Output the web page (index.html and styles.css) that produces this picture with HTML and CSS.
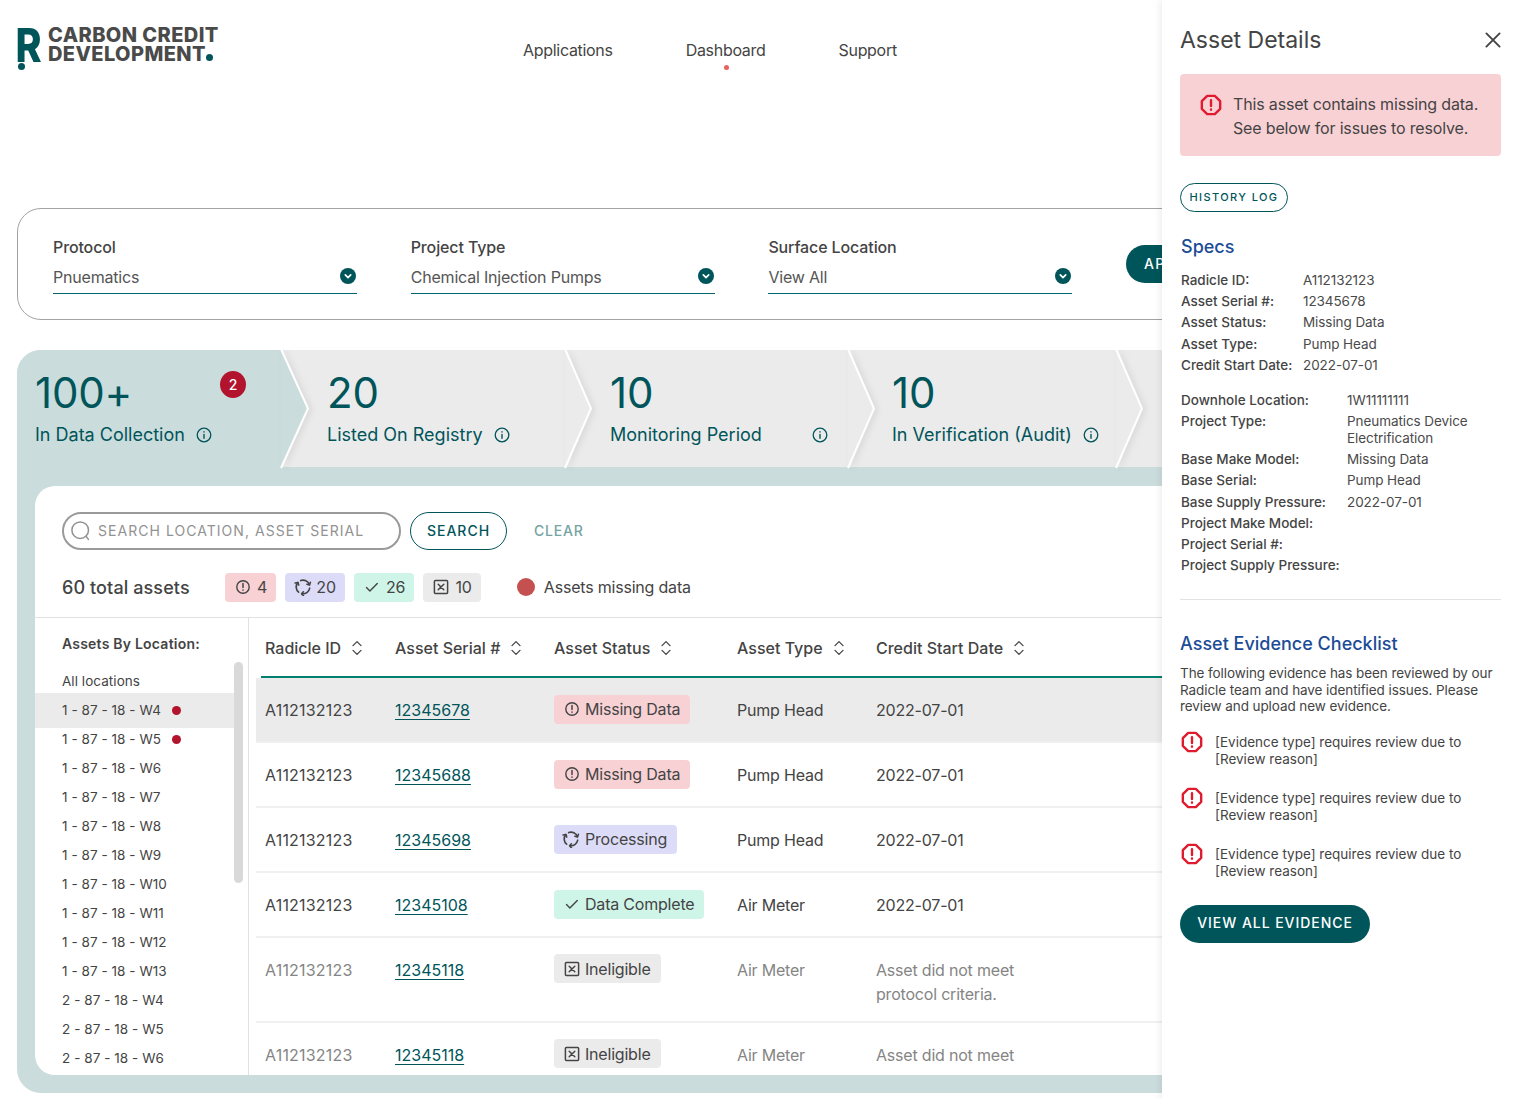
FILE: index.html
```html
<!DOCTYPE html>
<html lang="en">
<head>
<meta charset="utf-8">
<title>Carbon Credit Development</title>
<link rel="stylesheet" href="styles.css">
</head>
<body>
<svg class="sprite" aria-hidden="true">
  <symbol id="i-octagon" viewBox="0 0 24 24"><polygon points="7.86 2 16.14 2 22 7.86 22 16.14 16.14 22 7.86 22 2 16.14 2 7.86" fill="none" stroke="currentColor" stroke-width="2.6" stroke-linejoin="round"/><path d="M12 6.8v6.4M12 16.8v.3" fill="none" stroke="currentColor" stroke-width="2.6" stroke-linecap="round"/></symbol>
  <symbol id="i-alert" viewBox="0 0 16 16"><circle cx="8" cy="8" r="6.2" fill="none" stroke="currentColor" stroke-width="1.4"/><path d="M8 4.6v4M8 10.9v.3" fill="none" stroke="currentColor" stroke-width="1.5" stroke-linecap="round"/></symbol>
  <symbol id="i-proc" viewBox="0 0 18 18" fill="none" stroke="currentColor" stroke-width="1.6" stroke-linecap="round" stroke-linejoin="round">
    <g><path d="M6.67 2.61A6.8 6.8 0 0 1 15.39 6.67"/><path d="M12.9 6.3L15.5 6.9L16.4 4.2"/></g>
    <g transform="rotate(120 9 9)"><path d="M6.67 2.61A6.8 6.8 0 0 1 15.39 6.67"/><path d="M12.9 6.3L15.5 6.9L16.4 4.2"/></g>
    <g transform="rotate(240 9 9)"><path d="M6.67 2.61A6.8 6.8 0 0 1 15.39 6.67"/><path d="M12.9 6.3L15.5 6.9L16.4 4.2"/></g>
  </symbol>
  <symbol id="i-check" viewBox="0 0 16 16"><path d="M2.5 8.6l3.4 3.4 7.4-7.6" fill="none" stroke="currentColor" stroke-width="1.4" stroke-linecap="round" stroke-linejoin="round"/></symbol>
  <symbol id="i-xbox" viewBox="0 0 16 16"><rect x="1.4" y="1.4" width="13.2" height="13.2" rx="1" fill="none" stroke="currentColor" stroke-width="1.5"/><path d="M5.2 5.2l5.6 5.6M10.8 5.2l-5.6 5.6" fill="none" stroke="currentColor" stroke-width="1.5" stroke-linecap="round"/></symbol>
  <symbol id="i-info" viewBox="0 0 16 16"><circle cx="8" cy="8" r="6.8" fill="none" stroke="currentColor" stroke-width="1.3"/><path d="M8 7.4v3.8M8 4.8v.3" fill="none" stroke="currentColor" stroke-width="1.4" stroke-linecap="round"/></symbol>
  <symbol id="i-sort" viewBox="0 0 12 16"><path d="M2 5.6l4-4 4 4M2 10.4l4 4 4-4" fill="none" stroke="currentColor" stroke-width="1.3" stroke-linecap="round" stroke-linejoin="round"/></symbol>
  <symbol id="i-drop" viewBox="0 0 16 16"><circle cx="8" cy="8" r="8" fill="currentColor"/><path d="M5.3 6.9L8 9.6l2.7-2.7" fill="none" stroke="#fff" stroke-width="1.7" stroke-linecap="round" stroke-linejoin="round"/></symbol>
  <symbol id="i-search" viewBox="0 0 20 20"><circle cx="9.2" cy="9.2" r="8.3" fill="none" stroke="currentColor" stroke-width="1.5"/><path d="M15.2 15.4l2.2 3" fill="none" stroke="currentColor" stroke-width="1.5" stroke-linecap="round"/></symbol>
  <symbol id="i-close" viewBox="0 0 16 16"><path d="M1.4 1.4l13.2 13.2M14.6 1.4L1.4 14.6" fill="none" stroke="currentColor" stroke-width="1.9" stroke-linecap="round"/></symbol>
</svg>

<div class="page">
  <header class="topbar">
    <div class="logo">
      <div class="logo-mark"><span class="logo-r">R</span><span class="logo-dot"></span></div>
      <div class="logo-text">CARBON CREDIT<br>DEVELOPMENT<span class="logo-stop"></span></div>
    </div>
    <nav class="nav">
      <a class="nav-item">Applications</a>
      <a class="nav-item nav-active">Dashboard</a>
      <a class="nav-item">Support</a>
    </nav>
  </header>

  <section class="filters">
    <div class="field">
      <div class="field-label">Protocol</div>
      <div class="field-value">Pnuematics<svg class="field-icon"><use href="#i-drop"/></svg></div>
    </div>
    <div class="field">
      <div class="field-label">Project Type</div>
      <div class="field-value">Chemical Injection Pumps<svg class="field-icon"><use href="#i-drop"/></svg></div>
    </div>
    <div class="field">
      <div class="field-label">Surface Location</div>
      <div class="field-value">View All<svg class="field-icon"><use href="#i-drop"/></svg></div>
    </div>
    <button class="apply">APPLY</button>
  </section>

  <section class="board">
    <div class="tabs">
      <div class="tab tab-first">
        <div class="tab-num">100+</div>
        <div class="tab-label">In Data Collection<svg class="tab-info"><use href="#i-info"/></svg></div>
        <span class="tab-badge">2</span>
        <svg class="tab-arrow arrow-teal" viewBox="0 0 28 117" preserveAspectRatio="none"><polygon points="0,0 27,58.5 0,117"/><polyline points="0,-1 27,58.5 0,118"/></svg>
      </div>
      <div class="tab tab-second">
        <div class="tab-num">20</div>
        <div class="tab-label">Listed On Registry<svg class="tab-info"><use href="#i-info"/></svg></div>
        <svg class="tab-arrow" viewBox="0 0 28 117" preserveAspectRatio="none"><polygon points="0,0 26,58.5 0,117"/><polyline points="0,-1 26,58.5 0,118"/></svg>
      </div>
      <div class="tab tab-third">
        <div class="tab-num">10</div>
        <div class="tab-label tab-label-wide">Monitoring Period<svg class="tab-info"><use href="#i-info"/></svg></div>
        <svg class="tab-arrow" viewBox="0 0 28 117" preserveAspectRatio="none"><polygon points="0,0 26,58.5 0,117"/><polyline points="0,-1 26,58.5 0,118"/></svg>
      </div>
      <div class="tab tab-fourth">
        <div class="tab-num">10</div>
        <div class="tab-label">In Verification (Audit)<svg class="tab-info"><use href="#i-info"/></svg></div>
        <svg class="tab-arrow" viewBox="0 0 28 117" preserveAspectRatio="none"><polygon points="0,0 26,58.5 0,117"/><polyline points="0,-1 26,58.5 0,118"/></svg>
      </div>
      <div class="tab tab-rest"></div>
    </div>

    <div class="card">
      <div class="search-row">
        <div class="search-box"><svg class="search-icon"><use href="#i-search"/></svg><span>SEARCH LOCATION, ASSET SERIAL</span></div>
        <button class="btn-search">SEARCH</button>
        <span class="btn-clear">CLEAR</span>
      </div>
      <div class="totals">
        <span class="totals-text">60 total assets</span>
        <div class="chips">
          <span class="chip c-red"><svg class="chip-icon"><use href="#i-alert"/></svg>4</span>
          <span class="chip c-blue"><svg class="chip-icon proc"><use href="#i-proc"/></svg>20</span>
          <span class="chip c-green"><svg class="chip-icon"><use href="#i-check"/></svg>26</span>
          <span class="chip c-grey"><svg class="chip-icon"><use href="#i-xbox"/></svg>10</span>
        </div>
        <span class="legend"><i class="legend-dot"></i>Assets missing data</span>
      </div>
      <div class="split">
        <aside class="side">
          <div class="side-title">Assets By Location:</div>
          <ul class="locs">
            <li class="loc">All locations</li>
            <li class="loc loc-active">1 - 87 - 18 - W4<i class="dot"></i></li>
            <li class="loc">1 - 87 - 18 - W5<i class="dot"></i></li>
            <li class="loc">1 - 87 - 18 - W6</li>
            <li class="loc">1 - 87 - 18 - W7</li>
            <li class="loc">1 - 87 - 18 - W8</li>
            <li class="loc">1 - 87 - 18 - W9</li>
            <li class="loc">1 - 87 - 18 - W10</li>
            <li class="loc">1 - 87 - 18 - W11</li>
            <li class="loc">1 - 87 - 18 - W12</li>
            <li class="loc">1 - 87 - 18 - W13</li>
            <li class="loc">2 - 87 - 18 - W4</li>
            <li class="loc">2 - 87 - 18 - W5</li>
            <li class="loc">2 - 87 - 18 - W6</li>
          </ul>
          <div class="scrollbar"></div>
        </aside>
        <div class="table-wrap">
          <table class="assets">
            <colgroup><col class="c1"><col class="c2"><col class="c3"><col class="c4"><col class="c5"></colgroup>
            <thead>
              <tr>
                <th>Radicle ID<svg class="sort"><use href="#i-sort"/></svg></th>
                <th>Asset Serial #<svg class="sort"><use href="#i-sort"/></svg></th>
                <th>Asset Status<svg class="sort"><use href="#i-sort"/></svg></th>
                <th>Asset Type<svg class="sort"><use href="#i-sort"/></svg></th>
                <th>Credit Start Date<svg class="sort"><use href="#i-sort"/></svg></th>
              </tr>
            </thead>
            <tbody>
              <tr class="row-active">
                <td class="id">A112132123</td><td><a class="serial">12345678</a></td>
                <td><span class="status c-red"><svg class="st-icon"><use href="#i-alert"/></svg>Missing Data</span></td>
                <td>Pump Head</td><td>2022-07-01</td>
              </tr>
              <tr>
                <td class="id">A112132123</td><td><a class="serial">12345688</a></td>
                <td><span class="status c-red"><svg class="st-icon"><use href="#i-alert"/></svg>Missing Data</span></td>
                <td>Pump Head</td><td>2022-07-01</td>
              </tr>
              <tr>
                <td class="id">A112132123</td><td><a class="serial">12345698</a></td>
                <td><span class="status c-blue"><svg class="st-icon proc"><use href="#i-proc"/></svg>Processing</span></td>
                <td>Pump Head</td><td>2022-07-01</td>
              </tr>
              <tr>
                <td class="id">A112132123</td><td><a class="serial">12345108</a></td>
                <td><span class="status c-green"><svg class="st-icon"><use href="#i-check"/></svg>Data Complete</span></td>
                <td>Air Meter</td><td>2022-07-01</td>
              </tr>
              <tr class="row-muted row-tall">
                <td class="id">A112132123</td><td><a class="serial">12345118</a></td>
                <td><span class="status c-grey"><svg class="st-icon"><use href="#i-xbox"/></svg>Ineligible</span></td>
                <td>Air Meter</td><td>Asset did not meet<br>protocol criteria.</td>
              </tr>
              <tr class="row-muted row-tall">
                <td class="id">A112132123</td><td><a class="serial">12345118</a></td>
                <td><span class="status c-grey"><svg class="st-icon"><use href="#i-xbox"/></svg>Ineligible</span></td>
                <td>Air Meter</td><td>Asset did not meet</td>
              </tr>
            </tbody>
          </table>
        </div>
      </div>
    </div>
  </section>
</div>

<aside class="panel">
  <div class="panel-head">
    <h2 class="panel-title">Asset Details</h2>
    <svg class="panel-close"><use href="#i-close"/></svg>
  </div>
  <div class="alert">
    <svg class="octagon alert-icon"><use href="#i-octagon"/></svg>
    <p class="alert-text">This asset contains missing data.<br>See below for issues to resolve.</p>
  </div>
  <button class="btn-history">HISTORY LOG</button>
  <h3 class="panel-h specs-h">Specs</h3>
  <dl class="specs specs-a">
    <dt>Radicle ID:</dt><dd>A112132123</dd>
    <dt>Asset Serial #:</dt><dd>12345678</dd>
    <dt>Asset Status:</dt><dd>Missing Data</dd>
    <dt>Asset Type:</dt><dd>Pump Head</dd>
    <dt>Credit Start Date:</dt><dd>2022-07-01</dd>
  </dl>
  <dl class="specs specs-b">
    <dt>Downhole Location:</dt><dd>1W11111111</dd>
    <dt>Project Type:</dt><dd>Pneumatics Device Electrification</dd>
    <dt>Base Make Model:</dt><dd>Missing Data</dd>
    <dt>Base Serial:</dt><dd>Pump Head</dd>
    <dt>Base Supply Pressure:</dt><dd>2022-07-01</dd>
    <dt>Project Make Model:</dt><dd></dd>
    <dt>Project Serial #:</dt><dd></dd>
    <dt>Project Supply Pressure:</dt><dd></dd>
  </dl>
  <hr class="panel-rule">
  <h3 class="panel-h check-h">Asset Evidence Checklist</h3>
  <p class="check-intro">The following evidence has been reviewed by our Radicle team and have identified issues. Please review and upload new evidence.</p>
  <ul class="issues">
    <li class="issue"><svg class="octagon"><use href="#i-octagon"/></svg><span>[Evidence type] requires review due to [Review reason]</span></li>
    <li class="issue"><svg class="octagon"><use href="#i-octagon"/></svg><span>[Evidence type] requires review due to [Review reason]</span></li>
    <li class="issue"><svg class="octagon"><use href="#i-octagon"/></svg><span>[Evidence type] requires review due to [Review reason]</span></li>
  </ul>
  <button class="btn-evidence">VIEW ALL EVIDENCE</button>
</aside>
</body>
</html>
```

FILE: styles.css
```css
* { box-sizing: border-box; }
html, body { margin: 0; height: 1099px; overflow: hidden; background: #fff; }
body { font-family: Inter, "Liberation Sans", sans-serif; color: #444; font-size: 16px; position: relative; }
.sprite { display: none; }
button { font-family: inherit; cursor: pointer; }
ul { list-style: none; margin: 0; padding: 0; }
dl, dd, dt, p, h2, h3 { margin: 0; }

.page { width: 1516px; padding-left: 17px; overflow: hidden; }

/* header */
.topbar { height: 208px; display: flex; align-items: flex-start; padding-top: 26px; }
.logo { display: flex; gap: 5px; width: 506px; flex: none; }
.logo-mark { width: 26px; position: relative; height: 46px; }
.logo-r { display: block; font-weight: 800; font-size: 47px; line-height: 37px; color: #00555a; margin-left: -2px; letter-spacing: -1px; transform: scaleX(.84); transform-origin: 3px 0; }
.logo-dot { position: absolute; left: 1px; top: 37px; width: 7px; height: 7px; border-radius: 50%; background: #00555a; }
.logo-text { font-weight: 800; font-size: 20px; line-height: 18.5px; color: #4a4a4a; letter-spacing: .42px; white-space: nowrap; }
.logo-stop { display: inline-block; width: 7px; height: 7px; border-radius: 50%; background: #00555a; margin-left: 0; }
.nav { display: flex; gap: 73px; padding-top: 15px; }
.nav-item { font-size: 16px; line-height: 19px; position: relative; letter-spacing: -.3px; }
.nav-active::after { content: ""; position: absolute; left: 38px; top: 24px; width: 5px; height: 5px; border-radius: 50%; background: #e8615f; }

/* filters */
.filters { width: 1500px; height: 112px; border: 1px solid #a3a3a3; border-radius: 24px; display: flex; padding: 29px 35px 0; gap: 53.7px; }
.field { width: 304px; flex: none; }
.field-label { font-size: 16px; line-height: 19px; font-weight: 450; letter-spacing: -.12px; }
.field-value { margin-top: 11px; height: 26px; border-bottom: 1px solid #00666b; font-size: 16px; line-height: 19px; position: relative; letter-spacing: -.2px; color: #555; }
.field-icon { position: absolute; right: 1px; top: 0; width: 16px; height: 16px; color: #00555a; }
.apply { margin: 7px 0 0 0; height: 38px; width: 110px; border: 0; border-radius: 19px; background: #00555a; color: #fff; font-size: 14px; font-weight: 500; letter-spacing: 1.2px; text-align: left; padding: 0 0 2px 18px; }

/* board */
.board { margin-top: 30px; width: 1500px; height: 743px; background: #cbdcdc; border-radius: 24px; overflow: hidden; }
.tabs { display: flex; height: 117px; }
.tab { position: relative; height: 117px; flex: none; background: #ebebeb; }
.tab-first { width: 264px; padding-left: 18px; background: #cbdcdc; z-index: 5; }
.tab-second { width: 284px; padding-left: 46px; z-index: 4; }
.tab-third { width: 283px; padding-left: 45px; z-index: 3; }
.tab-fourth { width: 268px; padding-left: 44px; z-index: 2; }
.tab-rest { flex: 1; }
.tab-num { font-size: 42px; line-height: 50px; color: #00555a; padding-top: 18px; height: 68px; letter-spacing: -.2px; }
.tab-label { font-size: 18px; line-height: 22px; color: #00555a; margin-top: 6px; display: flex; align-items: center; letter-spacing: 0; white-space: nowrap; }
.tab-label-wide .tab-info { margin-left: 50px; }
.tab-info { width: 16px; height: 16px; margin-left: 11px; color: #00555a; flex: none; }
.tab-badge { position: absolute; left: 203px; top: 21px; width: 26px; height: 27px; border-radius: 50%; background: #b2142e; color: #fff; font-size: 14px; font-weight: 500; text-align: center; line-height: 27px; }
.tab-arrow { position: absolute; left: 100%; top: 0; width: 28px; height: 117px; overflow: visible; filter: drop-shadow(3px 1px 3px rgba(0,0,0,.07)); }
.tab-arrow polygon { fill: #ebebeb; }
.tab-arrow polyline { fill: none; stroke: #fff; stroke-width: 2; }
.arrow-teal polygon { fill: #cbdcdc; }

.card { margin: 19px 0 0 18px; width: 1470px; height: 589px; background: #fff; border-radius: 20px; overflow: hidden; }
.search-row { display: flex; align-items: center; padding: 26px 0 0 27px; height: 64px; }
.search-box { width: 339px; height: 38px; border: 2px solid #9a9a9a; border-radius: 19px; display: flex; align-items: center; padding: 0 0 2px 7px; color: #929292; font-size: 14px; letter-spacing: 1.04px; }
.search-icon { width: 20px; height: 20px; margin: 2px 7px 0 0; flex: none; }
.btn-search { margin-left: 9px; width: 97px; height: 38px; border: 1px solid #00555a; border-radius: 19px; background: #fff; color: #00555a; font-size: 14px; font-weight: 500; letter-spacing: 1px; padding: 0 0 2px; }
.btn-clear { margin: 0 0 2px 27px; color: #73a3a3; font-size: 14px; font-weight: 500; letter-spacing: .8px; }
.totals { display: flex; align-items: center; height: 67px; padding: 7px 0 0 27px; }
.totals-text { font-size: 18px; font-weight: 450; width: 163px; flex: none; letter-spacing: .1px; }
.chips { display: flex; gap: 9px; }
.chip { height: 29px; border-radius: 4px; display: inline-flex; align-items: center; padding: 0 9px 0 10px; font-size: 16px; letter-spacing: -.1px; }
.chip-icon { width: 16px; height: 16px; margin-right: 6px; flex: none; }
.chip-icon.proc { width: 18px; height: 18px; margin-left: -1px; margin-right: 4px; }
.c-red { background: #f8d1d5; }
.c-blue { background: #dcdcf8; }
.c-green { background: #cff5e9; }
.c-grey { background: #ebebeb; }
.legend { display: flex; align-items: center; margin-left: 36px; font-size: 16px; letter-spacing: -.2px; }
.legend-dot { width: 18px; height: 18px; border-radius: 50%; background: #c4514f; margin-right: 9px; }

.split { display: flex; border-top: 1px solid #e2e2e2; height: 458px; }
.side { width: 214px; flex: none; border-right: 1px solid #e2e2e2; position: relative; }
.side-title { font-size: 14px; font-weight: 600; line-height: 17px; padding: 17px 0 0 27px; height: 49px; letter-spacing: .22px; }
.locs { width: 199px; }
.loc { height: 29px; line-height: 29px; padding-left: 27px; font-size: 13.5px; display: flex; align-items: center; letter-spacing: .05px; white-space: nowrap; }
.loc-active { background: #ebebeb; height: 35px; margin: -3px 0; position: relative; z-index: 0; }
.dot { width: 9px; height: 9px; border-radius: 50%; background: #b2142e; margin-left: 11px; }
.scrollbar { position: absolute; left: 199px; top: 44px; width: 9px; height: 221px; background: #d9d9d9; border-radius: 5px; }

.table-wrap { flex: 1; padding-left: 7px; }
.assets { border-collapse: collapse; table-layout: fixed; width: 1240px; }
.c1 { width: 130px; } .c2 { width: 159px; } .c3 { width: 183px; } .c4 { width: 139px; }
.assets th { text-align: left; font-weight: 450; font-size: 16px; height: 60px; padding: 0 0 0 9px; background: linear-gradient(#00806f, #00806f) left bottom / 100% 2px no-repeat; letter-spacing: 0; white-space: nowrap; }
.assets th:first-child { background-size: calc(100% - 5px) 2px; background-position: right bottom; }
.assets th .sort { width: 12px; height: 16px; margin-left: 10px; vertical-align: -2px; color: #444; }
.assets td { height: 65px; padding: 0 0 0 9px; font-size: 16px; border-bottom: 2px solid #f0f0f0; letter-spacing: -.2px; vertical-align: middle; }
.assets td.id { letter-spacing: .2px; }
.assets .row-active td { background: #ebebeb; height: 64px; }
.assets .row-tall td { height: 85px; vertical-align: top; padding-top: 20px; line-height: 24px; }
.row-tall .status { margin-top: -4px; }
.row-muted td { color: #858585; }
.row-muted td .status { color: #444; }
.serial { color: #00555a; text-decoration: underline; text-underline-offset: 3px; letter-spacing: 0; }
.status { display: inline-flex; align-items: center; height: 29px; border-radius: 4px; padding: 0 10px; margin-top: -1px; white-space: nowrap; }
.st-icon { width: 16px; height: 16px; margin-right: 5px; flex: none; }
.st-icon.proc { width: 18px; height: 18px; margin-left: -2px; margin-right: 5px; }

/* panel */
.panel { position: absolute; left: 1162px; top: 0; width: 354px; height: 1099px; background: #fff; padding: 0 15px 0 18px; box-shadow: -3px 0 6px rgba(0,0,0,.06); }
.panel-head { height: 74px; display: flex; justify-content: space-between; align-items: flex-start; padding-top: 25px; }
.panel-title { font-size: 23px; line-height: 30px; font-weight: 400; color: #444; }
.panel-close { width: 16px; height: 16px; margin: 7px 0 0 0; color: #444; }
.alert { height: 82px; background: #f8d1d5; border-radius: 4px; display: flex; padding: 18px 0 0 20px; }
.octagon { width: 22px; height: 22px; flex: none; color: #e01b2f; margin-top: -3px; }
.alert .alert-icon { margin-top: 2px; }
.alert-text { margin-left: 11px; font-size: 16px; line-height: 24px; letter-spacing: -.16px; white-space: nowrap; }
.btn-history { display: block; margin-top: 27px; width: 108px; height: 29px; padding: 0 0 2px; border: 1px solid #00555a; border-radius: 15px; background: #fff; color: #00555a; font-size: 11px; font-weight: 500; letter-spacing: 1.4px; }
.panel-h { font-size: 18px; line-height: 22px; font-weight: 500; color: #1c4c96; }
.specs-h { margin: 24px 0 0 1px; }
.specs { display: grid; font-size: 13.5px; line-height: 17px; margin-left: 1px; row-gap: 4.2px; letter-spacing: -.08px; }
.specs-a { grid-template-columns: 122px 1fr; margin-top: 14px; }
.specs-b { grid-template-columns: 166px 1fr; margin-top: 18px; }
.specs dt { font-weight: 450; letter-spacing: 0; white-space: nowrap; }
.specs dd { color: #4a4a4a; }
.panel-rule { border: 0; border-top: 1px solid #e2e2e2; margin: 25px 0 0; }
.check-h { margin-top: 33px; }
.check-intro { margin-top: 10px; font-size: 13.5px; line-height: 16.5px; letter-spacing: -.08px; }
.issues { margin-top: 19px; }
.issue { display: flex; gap: 12px; height: 56px; font-size: 13.5px; line-height: 17px; padding-right: 30px; letter-spacing: 0; margin-left: 1px; }
.btn-evidence { display: block; margin-top: 3px; width: 190px; height: 38px; padding: 0 0 2px; border: 0; border-radius: 19px; background: #00555a; color: #fff; font-size: 14px; font-weight: 500; letter-spacing: .95px; }
```
